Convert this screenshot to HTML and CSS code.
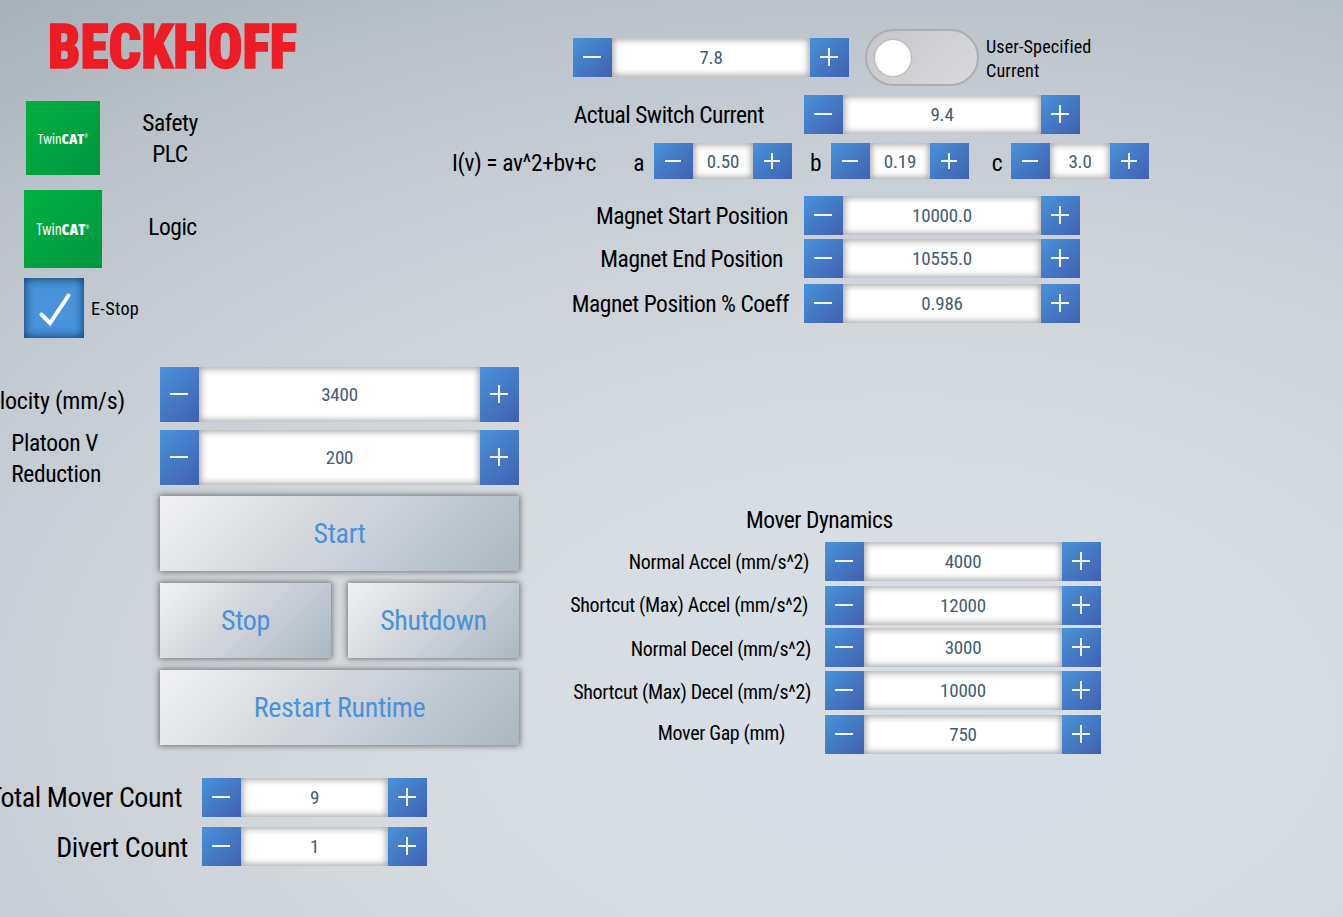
FILE: index.html
```
<!DOCTYPE html>
<html lang="en">
<head>
<meta charset="utf-8">
<title>Mover Control</title>
<link rel="stylesheet" href="styles.css">
</head>
<body>
<main class="screen">
  <section class="left">
    <svg class="logo" width="260" height="52" viewBox="0 0 260 52"><text class="logo-text" x="-1" y="47" textLength="249" lengthAdjust="spacingAndGlyphs">BECKHOFF</text></svg>
    <div class="status status-safety">
      <div class="tile tile-small"><span>Twin<b>CAT</b><sup>®</sup></span></div>
      <div class="status-name md">Safety<br>PLC</div>
    </div>
    <div class="status status-logic">
      <div class="tile"><span>Twin<b>CAT</b><sup>®</sup></span></div>
      <div class="status-name md">Logic</div>
    </div>
    <div class="estop">
      <div class="check"><svg width="60" height="60" viewBox="0 0 60 60"><path d="M17.5 36.5 26 45 44.5 17.5" class="tick"/></svg></div>
      <span class="sm">E-Stop</span>
    </div>
    <div class="row velocity"><div class="label md">Velocity (mm/s)</div><div class="stepper tall"><i class="btn minus"></i><span class="value">3400</span><i class="btn plus"></i></div></div>
    <div class="row platoon"><div class="label md two-line">Platoon V<br>Reduction</div><div class="stepper tall"><i class="btn minus"></i><span class="value">200</span><i class="btn plus"></i></div></div>
    <div class="actions">
      <button class="action wide">Start</button>
      <button class="action">Stop</button>
      <button class="action">Shutdown</button>
      <button class="action wide">Restart Runtime</button>
    </div>
    <div class="row total"><div class="label lg">Total Mover Count</div><div class="stepper count"><i class="btn minus"></i><span class="value">9</span><i class="btn plus"></i></div></div>
    <div class="row divert"><div class="label lg">Divert Count</div><div class="stepper count"><i class="btn minus"></i><span class="value">1</span><i class="btn plus"></i></div></div>
  </section>
  <section class="right">
    <div class="row user-current">
      <div class="stepper"><i class="btn minus"></i><span class="value">7.8</span><i class="btn plus"></i></div>
      <div class="toggle"><span class="knob"></span></div>
      <div class="toggle-text sm">User-Specified<br>Current</div>
    </div>
    <div class="row actual"><div class="label md">Actual Switch Current</div><div class="stepper"><i class="btn minus"></i><span class="value">9.4</span><i class="btn plus"></i></div></div>
    <div class="row formula">
      <div class="label md equation">I(v) = av^2+bv+c</div>
      <div class="label md coef-a">a</div><div class="stepper mini"><i class="btn minus"></i><span class="value">0.50</span><i class="btn plus"></i></div>
      <div class="label md coef-b">b</div><div class="stepper mini"><i class="btn minus"></i><span class="value">0.19</span><i class="btn plus"></i></div>
      <div class="label md coef-c">c</div><div class="stepper mini"><i class="btn minus"></i><span class="value">3.0</span><i class="btn plus"></i></div>
    </div>
    <div class="row magnet-start"><div class="label md">Magnet Start Position</div><div class="stepper"><i class="btn minus"></i><span class="value">10000.0</span><i class="btn plus"></i></div></div>
    <div class="row magnet-end"><div class="label md">Magnet End Position</div><div class="stepper"><i class="btn minus"></i><span class="value">10555.0</span><i class="btn plus"></i></div></div>
    <div class="row magnet-coeff"><div class="label md">Magnet Position % Coeff</div><div class="stepper"><i class="btn minus"></i><span class="value">0.986</span><i class="btn plus"></i></div></div>
    <div class="dynamics">
      <h2 class="md">Mover Dynamics</h2>
      <div class="row accel"><div class="label ms">Normal Accel (mm/s^2)</div><div class="stepper"><i class="btn minus"></i><span class="value">4000</span><i class="btn plus"></i></div></div>
      <div class="row max-accel"><div class="label ms">Shortcut (Max) Accel (mm/s^2)</div><div class="stepper"><i class="btn minus"></i><span class="value">12000</span><i class="btn plus"></i></div></div>
      <div class="row decel"><div class="label ms">Normal Decel (mm/s^2)</div><div class="stepper"><i class="btn minus"></i><span class="value">3000</span><i class="btn plus"></i></div></div>
      <div class="row max-decel"><div class="label ms">Shortcut (Max) Decel (mm/s^2)</div><div class="stepper"><i class="btn minus"></i><span class="value">10000</span><i class="btn plus"></i></div></div>
      <div class="row gap"><div class="label ms">Mover Gap (mm)</div><div class="stepper"><i class="btn minus"></i><span class="value">750</span><i class="btn plus"></i></div></div>
    </div>
  </section>
</main>
</body>
</html>
```
FILE: styles.css
```
* { box-sizing: border-box; }
body {
  margin: 0;
  font-family: "Roboto Condensed", Roboto, "Liberation Sans", sans-serif;
  font-stretch: 75%;
  color: #000;
}
.screen {
  display: grid;
  grid-template-columns: 540px 1fr;
  width: 1343px;
  height: 917px;
  overflow: hidden;
  background: radial-gradient(1500px 890px at 900px 715px, #d8dee6 0, #d7dde3 25%, #d4d9dd 40%, #cdd3d9 52%, #c5cbd3 68%, #b8c0c8 84%, #a6b0b6 100%);
}
.left, .right { display: flex; flex-direction: column; min-width: 0; }

/* Text sizes */
.sm { font-size: 18.2px; line-height: 24px; letter-spacing: 0.1px; }
.ms { font-size: 20px; line-height: 28px; letter-spacing: -0.35px; }
.md { font-size: 23.5px; line-height: 31px; letter-spacing: -0.48px; }
.lg { font-size: 28px; line-height: 36px; letter-spacing: -0.4px; }

/* Header and status */
.logo { display: block; margin: 21px 0 0 49px; flex: none; overflow: visible; }
.logo-text { font: 900 62px "Roboto Condensed", Roboto, sans-serif; fill: #ee1c25; stroke: #ee1c25; stroke-width: 1.6px; }
.status { display: flex; align-items: center; }
.status-safety { margin: 28px 0 0 26px; height: 74px; }
.status-logic { margin: 15px 0 0 24px; height: 78px; }
.tile {
  width: 78px; height: 78px;
  display: flex; align-items: center; justify-content: center;
  color: #fff; font: 15.4px "Open Sans", sans-serif; font-stretch: 85%;
  background: linear-gradient(135deg, #00b140, #009640);
}
.tile-small { width: 74px; height: 74px; font-size: 14.6px; }
.tile b { font-weight: 800; font-stretch: 87%; }
.tile sup { font-size: 5px; vertical-align: 6px; line-height: 0; }
.status-name { width: 140px; text-align: center; }
.status-safety .status-name { padding: 2px 0 0 0; }
.status-logic .status-name { padding: 0 0 3px 1px; }
.estop { display: flex; align-items: center; gap: 7px; margin: 10px 0 0 24px; }
.estop .sm { padding-top: 2px; letter-spacing: 0.3px; }
.check { width: 60px; height: 60px; background: #4893da; box-shadow: inset 0 0 10px 1px #173f6b; }
.tick { fill: none; stroke: #fff; stroke-width: 4px; stroke-linecap: round; }

/* Rows and numeric steppers */
.row { display: flex; align-items: center; flex: none; }
.label { display: flex; justify-content: flex-end; white-space: nowrap; flex: none; }
.stepper { display: flex; width: 276px; height: 39px; flex: none; }
.tall { width: 359px; height: 55px; }
.count { width: 225px; }
.mini { width: 138px; height: 36px; }
.btn {
  width: 39px; flex: none;
  display: grid; place-items: center;
  padding: 0 1px 1px 0;
  background: linear-gradient(135deg, #4893da, #4160b0);
}
.btn::before, .btn::after { content: ""; grid-area: 1 / 1; background: #fff; opacity: .92; }
.btn::before { width: 18px; height: 2px; }
.plus::after { width: 2px; height: 18px; }
.mini .btn::before { width: 16px; }
.mini .plus::after { height: 16px; }
.value {
  flex: 1;
  display: flex; align-items: center; justify-content: center;
  font-size: 19px; letter-spacing: -0.2px; color: #445c73;
  background: #fff;
  box-shadow: inset 0 0 6px 2px #aaa;
}

/* Left column */
.left .label { width: 160px; }
.velocity { margin-top: 29px; }
.velocity .label { padding: 13px 35px 0 0; font-size: 24px; letter-spacing: -0.2px; }
.platoon { height: 55px; margin-top: 8px; }
.platoon .two-line { padding: 3px 59px 0 0; letter-spacing: -0.35px; }
.actions {
  display: grid; grid-template-columns: 171px 171px;
  gap: 12px 17px; margin: 11px 0 0 160px;
}
.action {
  height: 75px; border: 0; padding: 0;
  font: 28px "Roboto Condensed", Roboto, sans-serif;
  letter-spacing: -0.38px;
  color: #4893da;
  background: linear-gradient(135deg, #f0f0f3 0, #e2e6e8 20%, #d6dadc 38%, #cfd3dc 50%, #b8c3cc 80%, #adb7bf 100%);
  box-shadow: 0 0 6px 1px rgba(0, 0, 0, .48);
}
.wide { grid-column: 1 / -1; }
.left .lg { width: 202px; }
.total { margin-top: 33px; }
.total .label { padding-right: 20px; letter-spacing: -0.45px; }
.divert { margin-top: 10px; }
.divert .label { padding: 2px 14px 0 0; }

/* Right column */
.right .label { width: 264px; }
.user-current { margin: 29px 0 0 33px; }
.toggle {
  width: 114px; height: 57px; margin-left: 16px; border-radius: 29px;
  display: flex; align-items: center; padding-left: 8px;
  border: 2px solid #adaeb2;
  background: linear-gradient(135deg, #c6c5ca, #dadadc);
}
.knob { width: 36px; height: 36px; border-radius: 50%; background: #fff; box-shadow: 0 0 2px #888; }
.toggle-text { margin: 3px 0 0 7px; }
.actual { margin-top: 9px; }
.right .label.md { padding-top: 2px; }
.actual .label { padding-right: 40px; }
.formula { margin-top: 9px; }
.right .formula .label { padding-top: 5px; }
.formula .equation { letter-spacing: -0.38px; }
.formula .coef-a, .formula .coef-b { padding-right: 10px; }
.formula .coef-c { padding-right: 9px; }
.right .equation { width: 56px; }
.right .coef-a { width: 58px; }
.right .coef-b { width: 39px; }
.right .coef-c { width: 42px; }
.magnet-start { margin-top: 17px; }
.magnet-start .label { padding-right: 16px; }
.magnet-end { margin-top: 4px; }
.magnet-end .label { padding-right: 21px; }
.magnet-coeff { margin-top: 6px; }
.magnet-coeff .label { padding-right: 15px; }
.dynamics { margin-top: 182px; }
.dynamics h2 { margin: 0 0 6px 206px; font-weight: 400; }
.dynamics .label { width: 285px; }
.accel .label { padding-right: 16px; }
.max-accel { margin-top: 5px; }
.max-accel .label { padding: 0 17px 1px 0; }
.decel { margin-top: 3px; }
.decel .label { padding: 3px 14px 0 0; }
.max-decel { margin-top: 4px; }
.max-decel .label { padding: 2px 14px 0 0; }
.gap { margin-top: 5px; }
.gap .label { padding: 0 40px 3px 0; }
```
